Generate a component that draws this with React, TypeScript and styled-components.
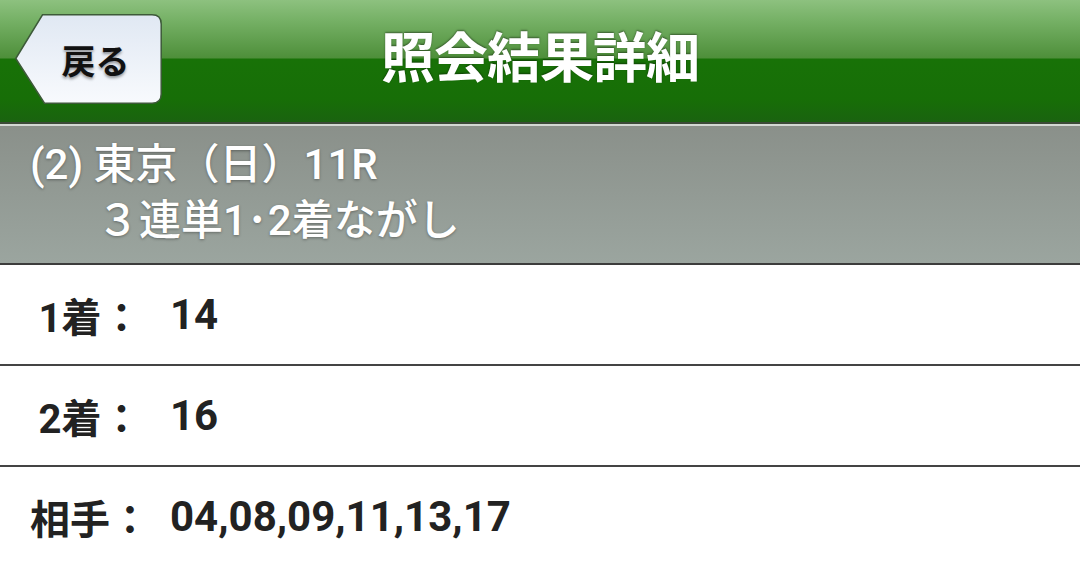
import styled, { createGlobalStyle } from "styled-components";

const GlobalStyle = createGlobalStyle`
  html, body {
    margin: 0;
    padding: 0;
    background: #ffffff;
  }
  body {
    font-family: Roboto, "Noto Sans CJK JP", sans-serif;
    width: 1080px;
    height: 567px;
    overflow: hidden;
  }
`;

const Page = styled.div`
  width: 1080px;
  display: flex;
  flex-direction: column;
`;

const Header = styled.header`
  height: 122px;
  display: grid;
  grid-template-columns: 1fr auto 1fr;
  align-items: center;
  background: linear-gradient(
    to bottom,
    #8dc17f 0px,
    #76b166 20px,
    #4e8f3a 58px,
    #187207 59px,
    #176e07 100px,
    #1a6310 122px
  );
  border-bottom: 2px solid #3b4a37;
`;

const BackButton = styled.button`
  position: relative;
  justify-self: start;
  margin: 0 0 4px 15px;
  width: 147px;
  height: 90px;
  padding: 0 0 0 14px;
  border: none;
  background: none;
  cursor: pointer;
  display: flex;
  align-items: center;
  justify-content: center;
  font-family: Roboto, "Noto Sans CJK JP", sans-serif;
  font-size: 34px;
  font-weight: 700;
  color: #111;
  text-shadow: 0 2px 3px rgba(0, 0, 0, 0.4);

  & svg {
    position: absolute;
    left: 0;
    top: 0;
  }
  & span {
    position: relative;
  }
`;

const Title = styled.h1`
  margin: 0 0 14px;
  font-size: 54px;
  font-weight: 700;
  color: #ffffff;
  letter-spacing: -1px;
  text-shadow: 0 -1px 2px rgba(0, 0, 0, 0.45);
`;

const RaceInfo = styled.section`
  border-top: 2px solid #d3d8d3;
  border-bottom: 2px solid #3c3c3c;
  background: linear-gradient(to bottom, #8a908a, #9ba59f);
  padding: 11px 0 14px 30px;
  color: #ffffff;
  font-size: 42px;
  font-weight: 500;
  line-height: 56px;
  text-shadow: 0 1px 3px rgba(0, 0, 0, 0.35);
`;

const InfoLine = styled.div<{ $indent?: number }>`
  padding-left: ${(p) => p.$indent ?? 0}px;
  white-space: nowrap;
`;

const Row = styled.div`
  height: 99px;
  display: flex;
  align-items: center;
  border-bottom: 2px solid #444444;
  background: #ffffff;
  color: #222222;
  font-size: 40px;
  font-weight: 700;

  &:last-child {
    border-bottom: none;
  }
`;

const Label = styled.div`
  width: 150px;
  margin-left: 15px;
  text-align: center;
`;

const Value = styled.div`
  margin-left: 5px;
  font-size: 42px;
`;

const BackShape = () => (
  <svg width="147" height="90" viewBox="0 0 147 90">
    <defs>
      <linearGradient id="backFill" x1="0" y1="0" x2="0" y2="1">
        <stop offset="0" stopColor="#e0e8f3" />
        <stop offset="1" stopColor="#f8fafd" />
      </linearGradient>
    </defs>
    <path
      d="M0.8 44.5 L27.5 0.8 H137 Q146.2 0.8 146.2 10 V80 Q146.2 89.2 137 89.2 H29.5 Z"
      fill="url(#backFill)"
      stroke="#3d5a39"
      strokeWidth="1.5"
    />
  </svg>
);

const results = [
  { label: "1着：", value: "14" },
  { label: "2着：", value: "16" },
  { label: "相手：", value: "04,08,09,11,13,17" },
];

export default function App() {
  return (
    <>
      <GlobalStyle />
      <Page>
        <Header>
          <BackButton>
            <BackShape />
            <span>戻る</span>
          </BackButton>
          <Title>照会結果詳細</Title>
          <div />
        </Header>

        <RaceInfo>
          <InfoLine>(2) 東京（日）11R</InfoLine>
          <InfoLine $indent={67}>３連単1･2着ながし</InfoLine>
        </RaceInfo>

        {results.map(({ label, value }) => (
          <Row key={label}>
            <Label>{label}</Label>
            <Value>{value}</Value>
          </Row>
        ))}
      </Page>
    </>
  );
}
